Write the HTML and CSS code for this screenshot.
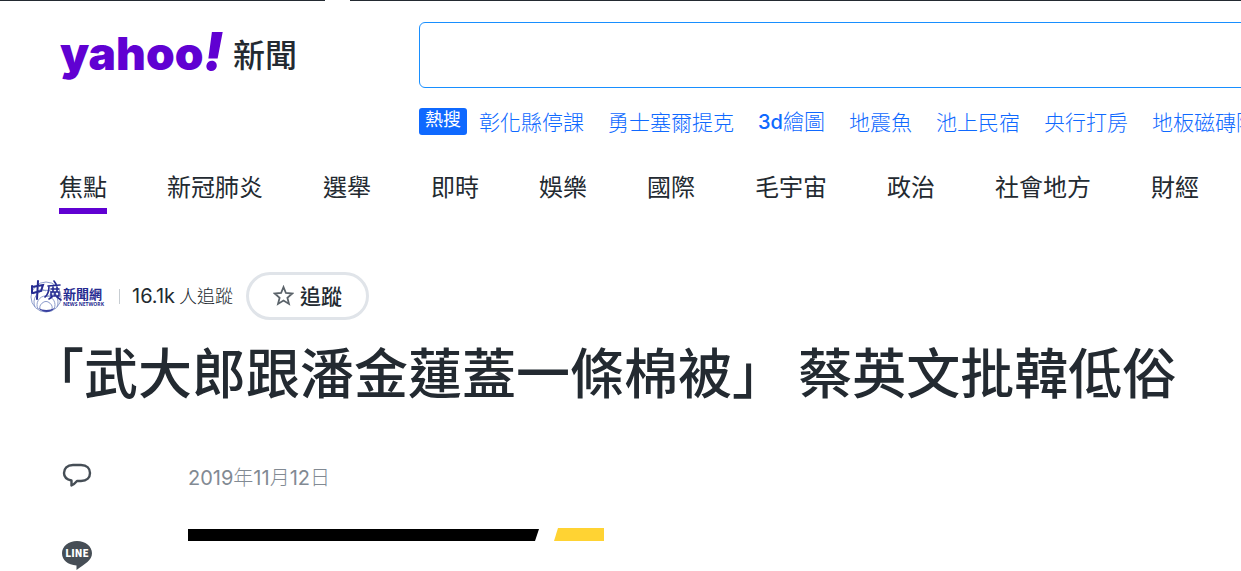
FILE: index.html
```html
<!DOCTYPE html>
<html lang="zh-Hant">
<head>
<meta charset="utf-8">
<title>「武大郎跟潘金蓮蓋一條棉被」 蔡英文批韓低俗</title>
<link rel="stylesheet" href="styles.css">
</head>
<body>
<div class="topline"><span class="topline-left"></span><span class="topline-right"></span></div>
<header class="header">
  <a class="brand" href="#"><span class="brand-name">yahoo<i class="brand-bang">!</i></span><span class="brand-section">新聞</span></a>
  <div class="search">
    <input class="search-box" type="text" aria-label="搜尋">
    <div class="trending">
      <span class="trending-label">熱搜</span>
      <a href="#">彰化縣停課</a>
      <a href="#">勇士塞爾提克</a>
      <a href="#"><span class="latin">3d</span>繪圖</a>
      <a href="#">地震魚</a>
      <a href="#">池上民宿</a>
      <a href="#">央行打房</a>
      <a href="#">地板磁磚隆</a>
    </div>
  </div>
</header>
<nav class="nav">
  <a class="active" href="#">焦點</a>
  <a href="#">新冠肺炎</a>
  <a href="#">選舉</a>
  <a href="#">即時</a>
  <a href="#">娛樂</a>
  <a href="#">國際</a>
  <a href="#">毛宇宙</a>
  <a href="#">政治</a>
  <a href="#">社會地方</a>
  <a href="#">財經</a>
</nav>
<main class="article">
  <div class="source">
    <svg class="source-logo" viewBox="0 0 76 34" role="img" aria-label="中廣新聞網">
      <g fill="none" stroke="#8d9ccb" stroke-width="1">
        <circle cx="16" cy="18" r="15"/>
        <path d="M5 28a12 12 0 1 1 22 0M8 30a9 9 0 1 1 16 0M11 32a6 6 0 1 1 10 0M3 15q8-7 13-3M29 17q-7-4-12 1"/>
      </g>
      <path d="M8 29q8 4 17 0-8 8-17 0Z" fill="#3940a0"/>
      <g fill="none" stroke="#252b91" stroke-linecap="round">
        <path stroke-width="2" d="M2 7v7M2 8l11-2-2 6-8 2M8 2 7 20"/>
        <path stroke-width="1.600" d="m24 2 2 3M18 7l12-1M19 7q0 8-4 11M21 10h8M23 8v4M27 8v4M21 13h8v4h-8zM25 13v4M22 18l-3 2M27 18l4 3"/>
      </g>
      <text class="source-name" x="33" y="20">新聞網</text>
      <text class="source-sub" x="33" y="27">NEWS NETWORK</text>
    </svg>
    <span class="divider"></span>
    <span class="followers"><span class="count">16.1k</span> 人追蹤</span>
    <button class="follow" type="button">
      <svg class="star" viewBox="0 0 20 20" aria-hidden="true"><path d="m10 2 2.300 5.600 6.100.5-4.700 4 1.500 5.900-5.200-3.200L4.800 18l1.500-5.900-4.700-4 6.100-.5Z" fill="none" stroke="#5b636a" stroke-width="1.700"/></svg>
      追蹤
    </button>
  </div>
  <h1 class="title">「武大郎跟潘金蓮蓋一條棉被」 蔡英文批韓低俗</h1>
  <div class="content">
    <aside class="share">
      <button class="icon-button" type="button" aria-label="留言">
        <svg class="comment-icon" viewBox="0 0 30 26"><path d="M11 2h8c6 0 9 3.500 9 8s-3 8-9 8h-4q-3 3.500-5.500 4.500V17.500C4.500 16.500 2 13.500 2 10c0-4.500 3-8 9-8Z" fill="none" stroke="#464e56" stroke-width="2.400" stroke-linejoin="round"/></svg>
      </button>
      <button class="icon-button" type="button" aria-label="LINE">
        <svg class="line-icon" viewBox="0 0 30 30"><path d="M15 0c8.300 0 15 5.300 15 12.300 0 7-7 10.500-15.500 16.700V24.500C6 24 0 19 0 12.300 0 5.300 6.700 0 15 0Z" fill="#464e56"/><text class="line-word" x="15" y="16" text-anchor="middle">LINE</text></svg>
      </button>
    </aside>
    <div class="story">
      <time class="date" datetime="2019-11-12"><span class="number">2019</span>年<span class="number">11</span>月<span class="number">12</span>日</time>
      <svg class="banner" viewBox="0 0 416 13" aria-hidden="true"><path d="M0 1h351l-4 12H0Z" fill="#000"/><path d="M370 0h46v13h-50Z" fill="#ffd333"/></svg>
    </div>
  </div>
</main>
</body>
</html>
```
FILE: styles.css
```css
* {
  box-sizing: border-box;
}

body {
  margin: 0;
  background: #fff;
  color: #232a31;
  font-family: "Noto Sans CJK TC", sans-serif;
  overflow: hidden;
}

a {
  color: inherit;
  text-decoration: none;
}

button {
  font-family: inherit;
  color: inherit;
  cursor: pointer;
}

.topline {
  display: flex;
  gap: 25px;
  height: 1px;
}

.topline span {
  background: #232a31;
}

.topline-left {
  flex: 0 0 325px;
}

.topline-right {
  flex: 1;
}

.header {
  display: flex;
  padding: 21px 0 0 60px;
}

.brand {
  display: flex;
  flex: 0 0 359px;
  align-items: center;
  gap: 5px;
  height: 62px;
}

.brand-name {
  width: 168px;
  color: #6001d2;
  font: 900 46px/62px Inter, sans-serif;
  white-space: nowrap;
}

.brand-bang {
  font-size: 52px;
  line-height: 48px;
}

.brand-section {
  font-size: 32px;
  font-weight: 500;
  line-height: 62px;
}

.search {
  flex: 1;
  min-width: 0;
}

.search-box {
  display: block;
  width: calc(100% + 8px);
  height: 66px;
  padding: 0 20px;
  border: 1px solid #188fff;
  border-radius: 6px;
  background: #fff;
  font-size: 24px;
}

.trending {
  display: flex;
  align-items: center;
  gap: 24px;
  margin-top: 18px;
  color: #0f69ff;
  font-size: 21px;
  font-weight: 300;
  line-height: 28px;
  white-space: nowrap;
}

.trending-label {
  height: 27px;
  margin-right: -12px;
  padding: 0 6px;
  border-radius: 3px;
  background: #0f69ff;
  color: #fff;
  font-size: 18px;
  font-weight: 400;
  line-height: 21px;
}

.latin {
  font-family: Inter, sans-serif;
  font-size: 20px;
  font-weight: 500;
}

.nav {
  display: flex;
  gap: 60px;
  padding: 35px 0 0 59px;
  font-size: 24px;
  line-height: 30px;
  white-space: nowrap;
}

.nav a {
  padding-bottom: 7px;
  border-bottom: 6px solid transparent;
}

.nav .active {
  border-color: #6001d2;
}

.article {
  padding: 58px 30px 0;
}

.source {
  display: flex;
  align-items: center;
  height: 48px;
}

.source-logo {
  width: 76px;
  height: 34px;
}

.source-name {
  fill: #252b91;
  font-size: 13px;
  font-weight: 700;
}

.source-sub {
  fill: #252b91;
  font-family: "Open Sans", sans-serif;
  font-size: 5px;
  font-weight: 700;
}

.divider {
  width: 1px;
  height: 15px;
  margin: 0 12px 0 13px;
  background: #c7cdd2;
}

.followers {
  font-size: 18px;
  font-weight: 300;
  line-height: 24px;
  padding-bottom: 2px;
  white-space: nowrap;
}

.count {
  font-family: Inter, sans-serif;
  font-size: 20px;
  font-weight: 400;
}

.follow {
  display: flex;
  align-items: center;
  justify-content: center;
  gap: 6px;
  width: 123px;
  height: 48px;
  margin-left: 13px;
  padding: 0 0 2px;
  border: 3px solid #e0e4e9;
  border-radius: 24px;
  background: #fff;
  font-size: 21px;
  font-weight: 500;
}

.star {
  width: 21px;
  height: 21px;
}

.title {
  margin: 15px 0 0;
  font-size: 54px;
  font-weight: 500;
  line-height: 72px;
  white-space: nowrap;
}

.content {
  display: flex;
  padding-top: 56px;
}

.share {
  display: flex;
  flex: 0 0 158px;
  flex-direction: column;
  align-items: flex-start;
  gap: 52px;
  padding-left: 32px;
}

.icon-button {
  display: block;
  padding: 0;
  border: 0;
  background: none;
}

.icon-button svg {
  display: block;
  width: 30px;
}

.comment-icon {
  height: 26px;
}

.line-icon {
  height: 30px;
}

.line-word {
  fill: #fff;
  font-family: "Noto Sans CJK TC", sans-serif;
  font-size: 10px;
  font-weight: 900;
}

.story {
  flex: 1;
}

.date {
  display: block;
  color: #828a93;
  font-size: 20px;
  font-weight: 300;
  line-height: 28px;
}

.number {
  font-family: Inter, sans-serif;
  font-weight: 400;
}

.banner {
  display: block;
  width: 416px;
  height: 13px;
  margin-top: 36px;
}
```
